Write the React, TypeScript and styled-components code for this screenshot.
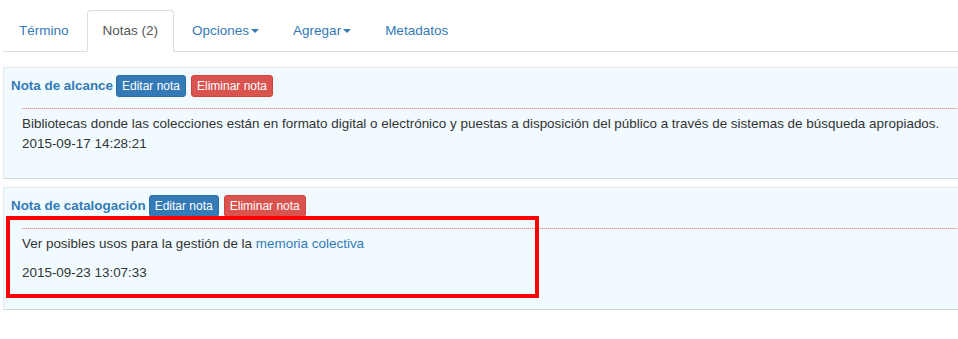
import React from "react";
import styled, { createGlobalStyle, css } from "styled-components";

const linkColor = "#337ab7";
const textColor = "#333333";

const GlobalStyle = createGlobalStyle`
  html, body {
    margin: 0;
    padding: 0;
    background: #ffffff;
    overflow: hidden;
  }
  body {
    font-family: "Liberation Sans", Arial, Helvetica, sans-serif;
    color: ${textColor};
  }
`;

const Page = styled.div`
  padding: 10px 0 0 3px;
`;

const Tabs = styled.ul`
  display: flex;
  list-style: none;
  margin: 0;
  padding: 0;
  border-bottom: 1px solid #dddddd;
`;

const Tab = styled.li`
  margin-right: 2px;
  margin-bottom: -1px;
`;

const TabLink = styled.a<{ $active?: boolean }>`
  display: flex;
  align-items: center;
  padding: 10px 15px;
  font-size: 13.5px;
  line-height: 20px;
  color: ${linkColor};
  text-decoration: none;
  border: 1px solid transparent;
  border-radius: 4px 4px 0 0;
  cursor: pointer;
  ${(p) =>
    p.$active &&
    css`
      color: #555555;
      background: #ffffff;
      border-color: #dddddd;
      border-bottom-color: transparent;
    `}
`;

const Caret = styled.span`
  display: inline-block;
  width: 0;
  height: 0;
  margin-left: 2px;
  border-top: 4px solid ${linkColor};
  border-left: 4px solid transparent;
  border-right: 4px solid transparent;
`;

const Notes = styled.div`
  display: flex;
  flex-direction: column;
  gap: 8px;
  margin-top: 15px;
`;

const Panel = styled.section<{ $bottom: number }>`
  background: #f0faff;
  border-top: 1px solid #e2ecf0;
  border-left: 1px solid #e2ecf0;
  border-bottom: 1px solid #d2d7da;
  padding: 7px 0 ${(p) => p.$bottom}px 7px;
  font-size: 13.45px;
  line-height: 20px;
`;

const Header = styled.div`
  display: flex;
  align-items: center;
  gap: 3px;
`;

const Title = styled.span`
  font-weight: bold;
  color: ${linkColor};
  font-size: 13.4px;
`;

const Button = styled.button<{ $variant: "primary" | "danger" }>`
  font-family: inherit;
  font-size: 12px;
  line-height: 18px;
  padding: 1px 5px;
  border-radius: 3px;
  color: #ffffff;
  cursor: pointer;
  border: 1px solid
    ${(p) => (p.$variant === "primary" ? "#2e6da4" : "#d43f3a")};
  background: ${(p) => (p.$variant === "primary" ? "#337ab7" : "#d9534f")};
  & + & {
    margin-left: 2px;
  }
`;

/* dotted separator drawn as alternating pixels, like the original */
const Body = styled.div<{ $highlight?: boolean }>`
  position: relative;
  margin: 11px 0 0 11px;
  padding-top: 6px;
  background: repeating-linear-gradient(
      90deg,
      #e88a8a 0 1px,
      #f7d6d6 1px 2px
    )
    top left / 100% 1px no-repeat;
  ${(p) =>
    p.$highlight &&
    css`
      &::after {
        content: "";
        position: absolute;
        top: -12px;
        left: -16px;
        width: 533px;
        height: 82px;
        box-sizing: border-box;
        border: 4px solid #ff0000;
        pointer-events: none;
      }
    `}
`;

const Text = styled.p<{ $gap: number }>`
  margin: 0 0 ${(p) => p.$gap}px 0;
  white-space: nowrap;
`;

const Link = styled.a`
  color: ${linkColor};
  text-decoration: none;
`;

const Stamp = styled.div``;

type Note = {
  title: string;
  text: React.ReactNode;
  date: string;
  gap: number;
  bottom: number;
  highlight?: boolean;
};

const notes: Note[] = [
  {
    title: "Nota de alcance",
    text: "Bibliotecas donde las colecciones están en formato digital o electrónico y puestas a disposición del público a través de sistemas de búsqueda apropiados.",
    date: "2015-09-17 14:28:21",
    gap: 0,
    bottom: 24,
  },
  {
    title: "Nota de catalogación",
    text: (
      <>
        Ver posibles usos para la gestión de la{" "}
        <Link href="#">memoria colectiva</Link>
      </>
    ),
    date: "2015-09-23 13:07:33",
    gap: 9,
    bottom: 26,
    highlight: true,
  },
];

const tabs = [
  { label: "Término" },
  { label: "Notas (2)", active: true },
  { label: "Opciones", dropdown: true },
  { label: "Agregar", dropdown: true },
  { label: "Metadatos" },
];

export default function App() {
  return (
    <Page>
      <GlobalStyle />
      <Tabs>
        {tabs.map((t) => (
          <Tab key={t.label}>
            <TabLink $active={t.active}>
              {t.label}
              {t.dropdown && <Caret />}
            </TabLink>
          </Tab>
        ))}
      </Tabs>
      <Notes>
        {notes.map((n) => (
          <Panel key={n.title} $bottom={n.bottom}>
            <Header>
              <Title>{n.title}</Title>
              <Button $variant="primary">Editar nota</Button>
              <Button $variant="danger">Eliminar nota</Button>
            </Header>
            <Body $highlight={n.highlight}>
              <Text $gap={n.gap}>{n.text}</Text>
              <Stamp>{n.date}</Stamp>
            </Body>
          </Panel>
        ))}
      </Notes>
    </Page>
  );
}
